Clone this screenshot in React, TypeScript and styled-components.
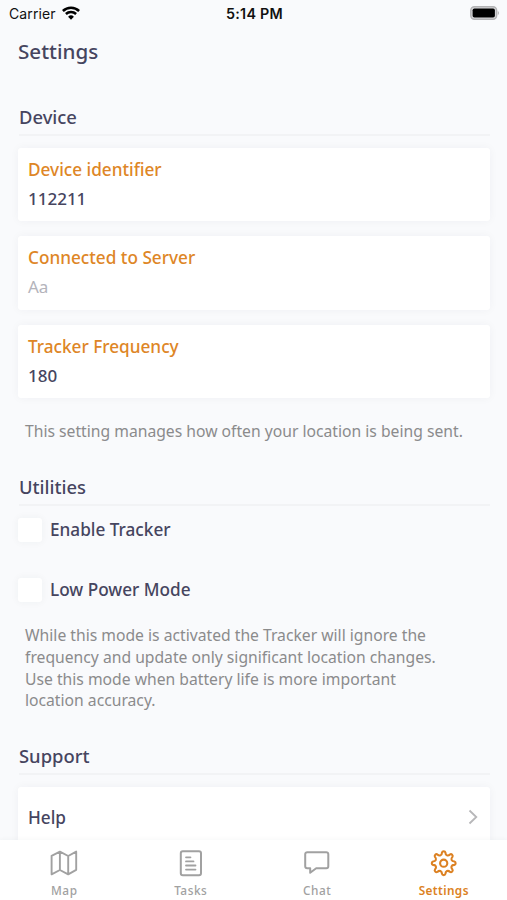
import React from "react";
import styled, { createGlobalStyle } from "styled-components";

const GlobalStyle = createGlobalStyle`
  * { box-sizing: border-box; }
  html, body { margin: 0; padding: 0; background: #f9fafc; }
`;

const Screen = styled.div`
  width: 507px;
  height: 900px;
  overflow: hidden;
  display: flex;
  flex-direction: column;
  background: #f9fafc;
  color: #46455f;
  font-family: "Noto Sans", "Open Sans", sans-serif;
`;

const StatusBar = styled.header`
  height: 28px;
  flex: none;
  display: grid;
  grid-template-columns: 1fr auto 1fr;
  align-items: center;
  padding: 0 7px 0 9px;
  color: #111;
  font: 400 14px/28px Inter, sans-serif;
`;

const Carrier = styled.div`
  display: flex;
  align-items: center;
  gap: 6px;
  letter-spacing: 0.1px;
  svg { margin-bottom: 2px; }
`;

const Clock = styled.div`
  font-weight: 600;
  font-size: 14.3px;
  letter-spacing: 0.25px;
`;

const Battery = styled.div`
  display: flex;
  justify-content: flex-end;
  padding-bottom: 2px;
`;

const Content = styled.main`
  flex: 1;
  min-height: 0;
  overflow: hidden;
  padding: 0 17px 0 18px;
`;

const Title = styled.h1`
  margin: 7px 0 0;
  font-size: 20.6px;
  line-height: 32px;
  font-weight: 500;
`;

const SectionTitle = styled.h2<{ $top: number }>`
  margin: ${(p) => p.$top}px 0 0 1px;
  height: 32px;
  border-bottom: 2px solid #f2f3f5;
  font-size: 18.4px;
  line-height: 25.6px;
  font-weight: 500;
`;

const Fields = styled.div`
  display: grid;
  gap: 15px;
  margin-top: 12px;
`;

const Card = styled.div`
  background: #fff;
  border-radius: 3px;
  box-shadow: 0 0 10px rgba(40, 50, 60, 0.045);
`;

const FieldCard = styled(Card)`
  height: 73.3px;
  padding: 7px 10px 0;
`;

const Label = styled.div`
  color: #de8626;
  font-size: 17.2px;
  line-height: 29px;
  font-weight: 500;
`;

const Value = styled.div<{ $placeholder?: boolean }>`
  color: ${(p) => (p.$placeholder ? "#b4b4bb" : "#46455f")};
  font-size: 17px;
  line-height: 29px;
  font-weight: ${(p) => (p.$placeholder ? 400 : 500)};
`;

const Hint = styled.p<{ $top: number }>`
  margin: ${(p) => p.$top}px 0 0 7px;
  color: #8b8b8c;
  font-size: 15.7px;
  line-height: 21.6px;
  white-space: nowrap;
`;

const Option = styled.label<{ $top: number }>`
  display: flex;
  align-items: flex-start;
  gap: 8px;
  height: 24px;
  margin-top: ${(p) => p.$top}px;
  font-size: 17.2px;
  line-height: 24px;
  font-weight: 500;
`;

const Box = styled.span`
  width: 24px;
  height: 24px;
  background: #fff;
  border-radius: 3px;
  box-shadow: 0 0 8px rgba(40, 50, 60, 0.05);
`;

const LinkCard = styled(Card)`
  display: flex;
  align-items: center;
  justify-content: space-between;
  height: 61px;
  margin-top: 12px;
  padding: 0 12px 0 10px;
  font-size: 17.2px;
  font-weight: 500;
`;

const TabBar = styled.nav`
  flex: none;
  height: 60px;
  display: grid;
  grid-template-columns: repeat(4, 1fr);
  padding-left: 1px;
  background: #fff;
  position: relative;
  box-shadow: 0 0 5px rgba(40, 50, 60, 0.05);
`;

const Tab = styled.div<{ $active?: boolean }>`
  display: flex;
  flex-direction: column;
  align-items: center;
  padding-top: 9px;
  color: ${(p) => (p.$active ? "#dc8122" : "#a1a1a1")};
  font-size: 11.8px;
  line-height: 16px;
  font-weight: ${(p) => (p.$active ? 600 : 500)};
  letter-spacing: ${(p) => (p.$active ? 0.4 : 0.55)}px;
  svg { display: block; margin-bottom: 5px; }
`;

const stroke = {
  width: 30,
  height: 28,
  viewBox: "0 0 30 28",
  fill: "none",
  stroke: "currentColor",
  strokeWidth: 2,
  strokeLinejoin: "round" as const,
  strokeLinecap: "round" as const,
};

const WifiIcon = () => (
  <svg width="18" height="14" viewBox="0 0 18 14" fill="none" stroke="#000" strokeWidth="2.5">
    <path d="M.9 5A11.5 11.5 0 0 1 17.1 5" />
    <path d="M3.9 8A7.3 7.3 0 0 1 14.1 8" />
    <path d="M9 13.7 6.1 10.8a4.1 4.1 0 0 1 5.8 0Z" fill="#000" stroke="none" />
  </svg>
);

const BatteryIcon = () => (
  <svg width="30" height="14" viewBox="0 0 30 14">
    <rect x=".8" y=".8" width="25.8" height="12.4" rx="3.6" fill="#d9d9db" stroke="#b3b3b5" strokeWidth="1.5" />
    <rect x="2.6" y="2.5" width="22.3" height="9" rx="1.8" fill="#000" />
    <path d="M27.8 5v4a2.3 2.3 0 0 0 0-4Z" fill="#b3b3b5" />
  </svg>
);

const MapIcon = () => (
  <svg {...stroke} strokeWidth={1.9}>
    <path d="M2.6 6.8 10.9 2.6 19.2 7 27.2 2.6V20.8L19.2 25.3 10.9 21 2.6 25.3ZM10.9 2.6V21M19.2 7V25.3" />
  </svg>
);

const TasksIcon = () => (
  <svg {...stroke}>
    <rect x="4.8" y="2.2" width="20.2" height="24" rx="2" />
    <path d="M10 8.3h4.5M10 12.4h7.5M10 16.5h9.5M10 20.6h9.5" strokeWidth="1.8" />
  </svg>
);

const ChatIcon = () => (
  <svg {...stroke}>
    <path d="M5.2 3.2H24.3a2 2 0 0 1 2 2V17.3a2 2 0 0 1-2 2H14.2L8.2 23.8V19.3H5.2a2 2 0 0 1-2-2V5.2a2 2 0 0 1 2-2Z" />
  </svg>
);

const GearIcon = () => (
  <svg {...stroke} strokeWidth={2.1}>
    {(() => {
      const at = (r: number, deg: number) => {
        const a = (deg * Math.PI) / 180;
        return `${(14.7 + r * Math.sin(a)).toFixed(2)} ${(14.2 - r * Math.cos(a)).toFixed(2)}`;
      };
      let d = `M${at(10.8, -9)}`;
      for (let t = 0; t < 360; t += 45) {
        d += `C${at(12.4, t - 6)} ${at(12.4, t + 6)} ${at(10.8, t + 9)}`;
        d += `C${at(7.9, t + 13)} ${at(7.9, t + 32)} ${at(10.8, t + 36)}`;
      }
      return <path d={d + "Z"} />;
    })()}
    <circle cx="14.7" cy="14.2" r="3.6" />
  </svg>
);

const Chevron = () => (
  <svg width="10" height="16" viewBox="0 0 10 16" fill="none" stroke="#b7b7b9" strokeWidth="1.8">
    <path d="M1.5 1.5 8.3 8l-6.8 6.5" />
  </svg>
);

const fields = [
  { label: "Device identifier", value: "112211" },
  { label: "Connected to Server", value: "Aa", placeholder: true },
  { label: "Tracker Frequency", value: "180" },
];

export default function App() {
  return (
    <Screen>
      <GlobalStyle />
      <StatusBar>
        <Carrier>Carrier <WifiIcon /></Carrier>
        <Clock>5:14 PM</Clock>
        <Battery><BatteryIcon /></Battery>
      </StatusBar>
      <Content>
        <Title>Settings</Title>
        <SectionTitle $top={37}>Device</SectionTitle>
        <Fields>
          {fields.map((f) => (
            <FieldCard key={f.label}>
              <Label>{f.label}</Label>
              <Value $placeholder={f.placeholder}>{f.value}</Value>
            </FieldCard>
          ))}
        </Fields>
        <Hint $top={23}>This setting manages how often your location is being sent.</Hint>
        <SectionTitle $top={32}>Utilities</SectionTitle>
        <Option $top={12}><Box />Enable Tracker</Option>
        <Option $top={36}><Box />Low Power Mode</Option>
        <Hint $top={23}>
          While this mode is activated the Tracker will ignore the<br />
          frequency and update only significant location changes.<br />
          Use this mode when battery life is more important<br />
          location accuracy.
        </Hint>
        <SectionTitle $top={31}>Support</SectionTitle>
        <LinkCard>Help<Chevron /></LinkCard>
      </Content>
      <TabBar>
        <Tab><MapIcon />Map</Tab>
        <Tab><TasksIcon />Tasks</Tab>
        <Tab><ChatIcon />Chat</Tab>
        <Tab $active><GearIcon />Settings</Tab>
      </TabBar>
    </Screen>
  );
}
